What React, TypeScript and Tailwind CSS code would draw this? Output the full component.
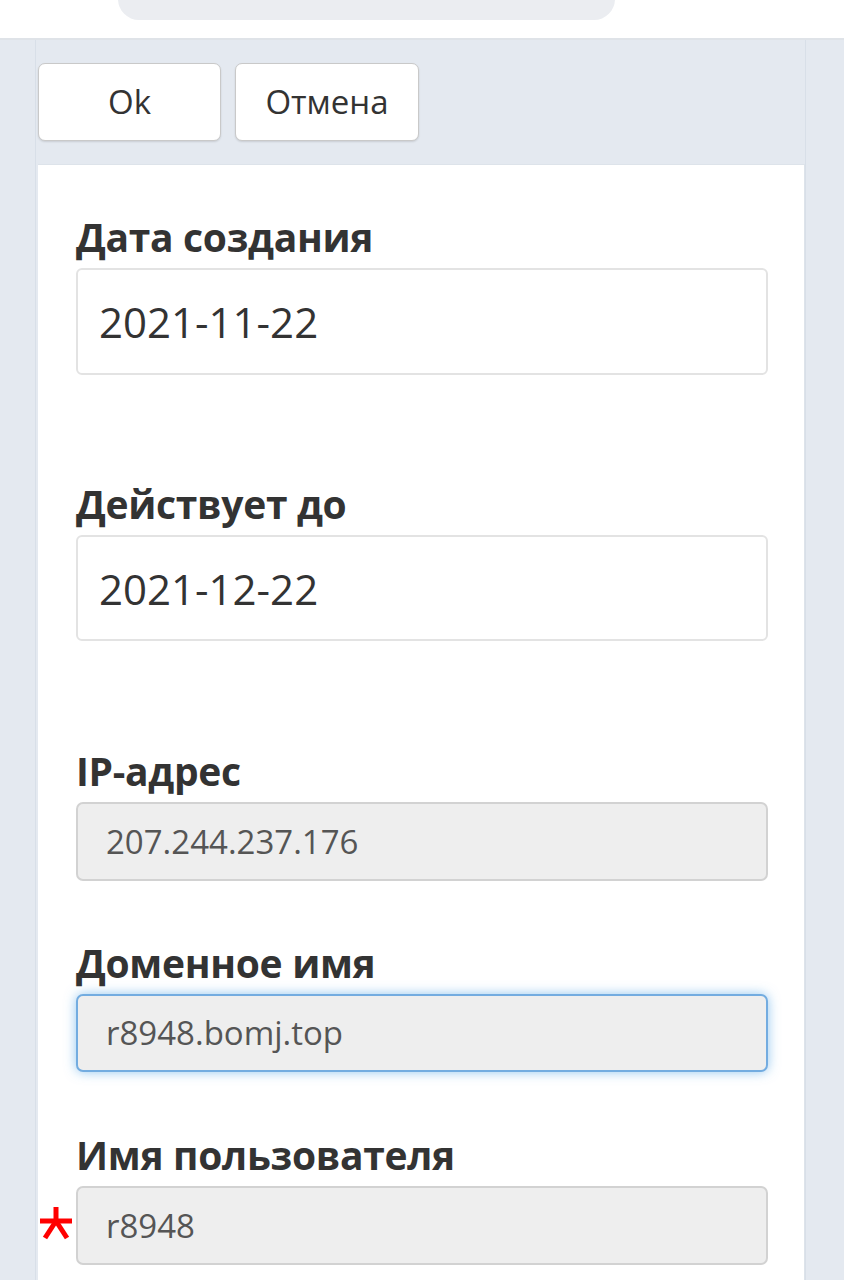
import React from "react";

function Label({ children, className = "" }: { children: React.ReactNode; className?: string }) {
  return (
    <div className={"text-[39px] leading-[44px] pb-[8px] font-bold text-[#333] tracking-[-0.3px] " + className}>{children}</div>
  );
}

export default function App() {
  return (
    <div className="min-h-[1280px] bg-[#e4e9f0] font-['Open_Sans',sans-serif] overflow-hidden">
      <header className="h-[40px] bg-white border-b-2 border-[#dfe3e8] overflow-hidden flex">
        <div className="ml-[118px] w-[497px] h-[42px] -mt-[22px] rounded-full bg-[#ebedf1]" />
      </header>
      <div className="ml-[35px] w-[771px] min-h-[1240px] border-l border-r border-[#d8dfe8] pl-[2px] pr-[1px] pt-[23px]">
        <div className="flex gap-[14px]">
          <button className="w-[183px] h-[78px] bg-white border border-[#c9c9c9] rounded-[7px] shadow-[0_1px_2px_rgba(0,0,0,0.12)] text-[33px] text-[#333]">
            Ok
          </button>
          <button className="w-[184px] h-[78px] bg-white border border-[#c9c9c9] rounded-[7px] shadow-[0_1px_2px_rgba(0,0,0,0.12)] text-[33px] text-[#333]">
            Отмена
          </button>
        </div>
        <div className="mt-[23px] w-[767px] min-h-[1120px] bg-white border-t border-r border-[#dde3ea] pl-[38px] pt-[50px]">
          <Label>Дата создания</Label>
          <div className="mt-[1px] w-[692px] h-[107px] bg-white border-2 border-[#e3e3e3] rounded-[6px] flex items-center pl-[21px] text-[42px] text-[#333]">
            2021-11-22
          </div>

          <Label className="mt-[107px]">Действует до</Label>
          <div className="mt-[1px] w-[692px] h-[106px] bg-white border-2 border-[#e3e3e3] rounded-[6px] flex items-center pl-[21px] text-[42px] text-[#333]">
            2021-12-22
          </div>

          <Label className="mt-[108px]">IP-адрес</Label>
          <div className="mt-[1px] w-[692px] h-[79px] bg-[#eeeeee] border-2 border-[#d2d2d2] rounded-[7px] flex items-center pl-[28px] text-[33px] text-[#555]">
            207.244.237.176
          </div>

          <Label className="mt-[60px]">Доменное имя</Label>
          <div className="mt-[1px] w-[692px] h-[78px] bg-[#eeeeee] border-2 border-[#73ace0] rounded-[7px] shadow-[0_0_12px_rgba(102,175,233,0.7)] flex items-center pl-[28px] text-[33px] text-[#555]">
            r8948.bomj.top
          </div>

          <Label className="mt-[61px]">Имя пользователя</Label>
          <div className="relative mt-[1px] w-[692px] h-[79px] bg-[#eeeeee] border-2 border-[#d2d2d2] rounded-[7px] flex items-center pl-[28px] text-[33px] text-[#555]">
            <svg className="absolute left-[-40px] top-[15px]" width="36" height="38" viewBox="0 0 36 38">
              <g stroke="#ff0000" strokeWidth="5" strokeLinecap="butt" fill="none">
                <line x1="18" y1="4" x2="18" y2="20" />
                <line x1="2" y1="18" x2="34" y2="18" />
                <line x1="18" y1="18" x2="7" y2="35" />
                <line x1="18" y1="18" x2="29" y2="35" />
              </g>
            </svg>
            r8948
          </div>
        </div>
      </div>
    </div>
  );
}
